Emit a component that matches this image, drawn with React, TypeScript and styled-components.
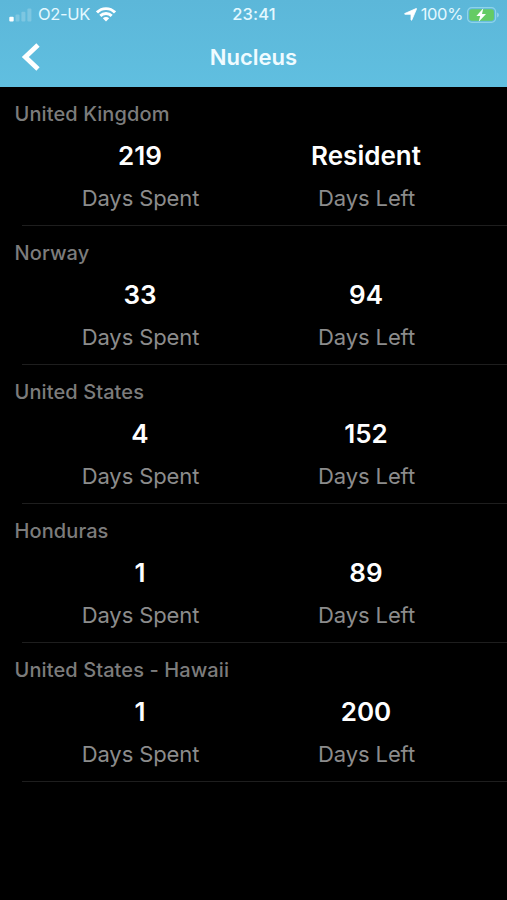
import React from "react";
import styled, { createGlobalStyle } from "styled-components";

const Global = createGlobalStyle`
  * { box-sizing: border-box; }
  body { margin: 0; background: #000; font-family: Inter, "Liberation Sans", sans-serif; }
`;
const Screen = styled.main`
  width: 507px; height: 900px; background: #000; overflow: hidden;
`;
const Header = styled.header`
  height: 87px; background: linear-gradient(#5cb7d9, #60bfe0);
  color: #fff; display: flex; flex-direction: column;
`;
const StatusBar = styled.div`
  height: 29px; padding: 0 8px 0 9px; display: grid; grid-template-columns: 1fr auto 1fr;
  align-items: center; font-size: 16.5px; line-height: 29px; color: #e4f8ff;
`;
const StatusGroup = styled.div<{ $end?: boolean }>`
  display: flex; align-items: center; gap: ${(p) => (p.$end ? 4 : 6)}px;
  justify-content: ${(p) => (p.$end ? "flex-end" : "flex-start")};
`;
const Carrier = styled.span`letter-spacing: -0.3px;`;
const Charge = styled.span`letter-spacing: -0.35px;`;
const Clock = styled.div`font-weight: 500; letter-spacing: 0.15px;`;
const NavBar = styled.nav`
  height: 58px; display: grid; grid-template-columns: 60px 1fr 60px; align-items: center;
`;
const BackButton = styled.button`
  border: 0; background: none; padding: 0 0 2px 21px; display: flex; color: inherit;
`;
const Title = styled.h1`
  margin: -2px 0 0; text-align: center; font-size: 22px; font-weight: 600; color: #f0fbff;
`;
const Entry = styled.section`
  height: 139px; padding: 14px 0 0 14.5px;
  background: linear-gradient(#1e1e1e, #1e1e1e) 22px 100% / 100% 1px no-repeat;
`;
const Country = styled.h2`
  margin: 0; font-size: 20px; line-height: 26px; font-weight: 550; color: #7c7c7c;
  letter-spacing: 0.1px;
`;
const Stats = styled.div`
  display: grid; grid-template-columns: 226px 226px; margin-left: 12.5px;
`;
const Stat = styled.div`
  display: flex; flex-direction: column; align-items: center; padding-top: 11px;
`;
const Value = styled.strong`
  font-size: 26px; line-height: 36px; font-weight: 600; color: #fff;
`;
const Label = styled.span`
  margin: 9px 0 0 1px; font-size: 22px; line-height: 30px; color: #8c8c8c;
  letter-spacing: -0.1px;
`;

function SignalIcon() {
  return (
    <svg width="23" height="14" viewBox="0 0 23 14" fill="#fff">
      <rect x="0.3" y="8.8" width="4.4" height="4.7" rx="1" />
      <g opacity="0.2">
        <rect x="6.5" y="6.5" width="4" height="7" rx="1" />
        <rect x="12.4" y="3.8" width="4" height="9.7" rx="1" />
        <rect x="18.4" y="0.5" width="4" height="13" rx="1" />
      </g>
    </svg>
  );
}

function WifiIcon() {
  return (
    <svg width="20" height="15" viewBox="0 0 20 15" fill="none" stroke="#fff" strokeWidth="2.9">
      <path d="M1 5.4C6 0.3 14 0.3 19 5.4" />
      <path d="M4.3 8.9C7.5 5.7 12.5 5.7 15.7 8.9" />
      <path d="M6.8 11.3C8.6 9.5 11.4 9.5 13.2 11.3L10 14.5Z" fill="#fff" stroke="none" />
    </svg>
  );
}

function LocationIcon() {
  return (
    <svg width="13" height="13" viewBox="0 0 13 13" fill="#fff" stroke="#fff" strokeWidth="0.8" strokeLinejoin="round">
      <path d="M12 0.6Q12.8 0.3 12.5 1.1L7.8 12Q7.3 12.7 7 12V6.3H0.9Q0.2 6 0.8 5.5Z" />
    </svg>
  );
}

function BatteryIcon() {
  return (
    <svg width="32" height="16" viewBox="0 0 32 16">
      <rect x="0.6" y="0.6" width="28" height="14.8" rx="4.2" fill="none" stroke="#8fd3ea" strokeWidth="1.2" />
      <rect x="2.3" y="2.3" width="24.6" height="11.4" rx="2.6" fill="#65cb64" />
      <path d="M30 5.4Q32 6.2 32 8Q32 9.8 30 10.6Z" fill="#8fd3ea" />
      <path d="M16.3 1.3L9.4 8.9H13.2L11.7 14.7L19 7.1H15Z" fill="#fff" />
    </svg>
  );
}

const entries = [
  { country: "United Kingdom", spent: "219", left: "Resident" },
  { country: "Norway", spent: "33", left: "94" },
  { country: "United States", spent: "4", left: "152" },
  { country: "Honduras", spent: "1", left: "89" },
  { country: "United States - Hawaii", spent: "1", left: "200" },
];

export default function App() {
  return (
    <Screen>
      <Global />
      <Header>
        <StatusBar>
          <StatusGroup>
            <SignalIcon />
            <Carrier>O2-UK</Carrier>
            <WifiIcon />
          </StatusGroup>
          <Clock>23:41</Clock>
          <StatusGroup $end>
            <LocationIcon />
            <Charge>100%</Charge>
            <BatteryIcon />
          </StatusGroup>
        </StatusBar>
        <NavBar>
          <BackButton aria-label="Back">
            <svg width="20" height="30" viewBox="0 0 20 30" fill="none" stroke="#fff" strokeWidth="4.8"><path d="M17 3L4.3 15L17 27" /></svg>
          </BackButton>
          <Title>Nucleus</Title>
        </NavBar>
      </Header>
      {entries.map((e) => (
        <Entry key={e.country}>
          <Country>{e.country}</Country>
          <Stats>
            <Stat><Value>{e.spent}</Value><Label>Days Spent</Label></Stat>
            <Stat><Value>{e.left}</Value><Label>Days Left</Label></Stat>
          </Stats>
        </Entry>
      ))}
    </Screen>
  );
}
